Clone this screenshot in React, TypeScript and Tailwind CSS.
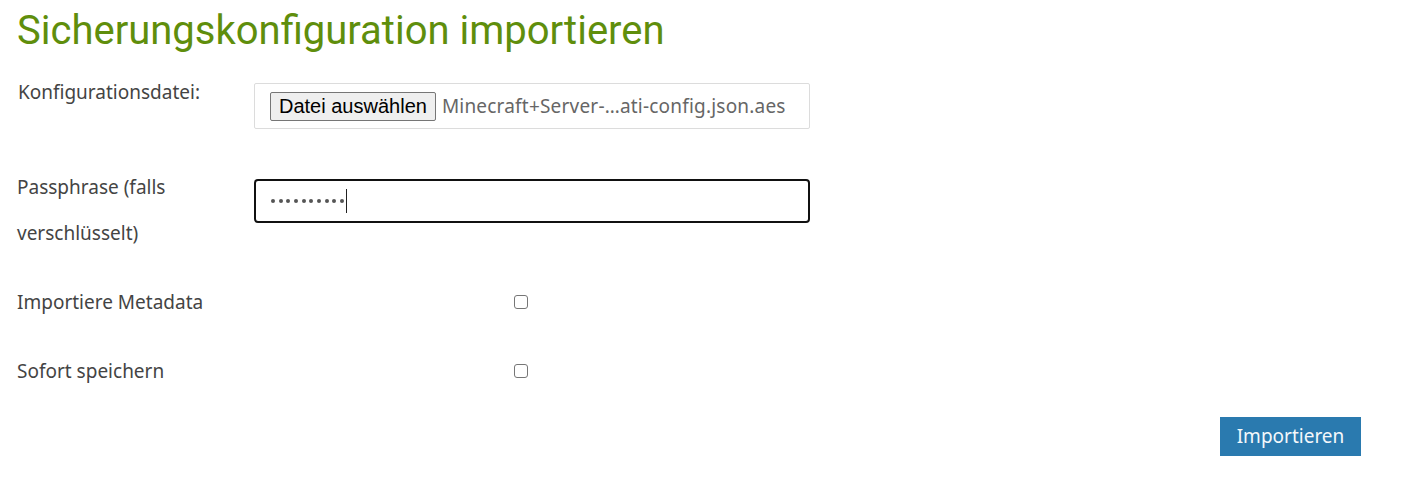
import React from "react";

const font = { fontFamily: '"Noto Sans", "Open Sans", sans-serif' };

export default function App() {
  return (
    <div className="w-[1403px] h-[491px] bg-white text-[#444]" style={font}>
      <div className="pl-[17px] pr-[42px]">
        <h1
          className="pt-[7px] text-[40px] leading-[48px] text-[#5f8e0c] font-normal"
          style={{ fontFamily: 'Roboto, "Noto Sans", sans-serif' }}
        >
          Sicherungskonfiguration importieren
        </h1>

        <div className="mt-[28px] flex items-start">
          <div className="w-[237px] pl-[1px] text-[19px] leading-[18px]">Konfigurationsdatei:</div>
          <div className="w-[556px] h-[46px] border border-[#dcdcdc] rounded-[2px] flex items-center pl-[15px]">
            <div
              className="h-[29px] px-[8px] flex items-center bg-[#efefef] border border-[#767676] rounded-[2px] text-[20px] text-black"
              style={{ fontFamily: '"Liberation Sans", Arial, sans-serif' }}
            >
              Datei auswählen
            </div>
            <span className="ml-[6px] text-[19px] text-[#666] tracking-[0.2px]">Minecraft+Server-…ati-config.json.aes</span>
          </div>
        </div>

        <div className="mt-[35px] flex items-start">
          <div className="w-[237px] text-[19px] leading-[46px]">
            Passphrase (falls
            <br />
            verschlüsselt)
          </div>
          <div className="mt-[15px] w-[556px] h-[44px] border-2 border-[#111] rounded-[4px] flex items-center pl-[15px]">
            <div className="flex items-center gap-[3.67px]">
              {Array.from({ length: 10 }).map((_, i) => (
                <div key={i} className="w-[4px] h-[4px] rounded-full bg-[#555]" />
              ))}
            </div>
            <div className="ml-[2px] w-[1px] h-[24px] bg-[#222]" />
          </div>
        </div>

        <div className="mt-[26px] flex items-center h-[40px]">
          <div className="w-[497px] text-[19px]">Importiere Metadata</div>
          <div className="w-[14px] h-[14px] border border-[#767676] rounded-[3px] bg-white" />
        </div>

        <div className="mt-[29px] flex items-center h-[40px]">
          <div className="w-[497px] text-[19px]">Sofort speichern</div>
          <div className="w-[14px] h-[14px] border border-[#767676] rounded-[3px] bg-white" />
        </div>

        <div className="mt-[26px] flex justify-end">
          <div className="w-[141px] h-[39px] bg-[#2a7aaf] text-[#f4f8fb] text-[19px] flex items-center justify-center">
            Importieren
          </div>
        </div>
      </div>
    </div>
  );
}
